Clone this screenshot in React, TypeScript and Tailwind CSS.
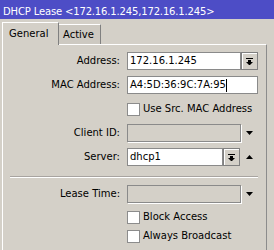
import React from "react";

function ComboBtn() {
  return (
    <div className="w-[17px] h-[18px] bg-[#d4d0c8] border border-[#808080] shadow-[inset_1px_1px_0_#ffffff] flex items-center justify-center">
      <svg width="7" height="7" viewBox="0 0 7 7">
        <rect x="0" y="0" width="7" height="1" fill="#000" />
        <rect x="2" y="2" width="3" height="2" fill="#000" />
        <polygon points="0,4 7,4 3.5,7.5" fill="#000" />
      </svg>
    </div>
  );
}

function Tri({ up }: { up?: boolean }) {
  return (
    <div className="w-[17px] h-[18px] flex items-center justify-center">
      <svg width="7" height="4" viewBox="0 0 7 4">
        {up ? (
          <polygon points="3.5,0 7,4 0,4" fill="#000" />
        ) : (
          <polygon points="0,0 7,0 3.5,4" fill="#000" />
        )}
      </svg>
    </div>
  );
}

function Label({ children }: { children?: React.ReactNode }) {
  return (
    <div className="w-[124px] pr-[7px] text-right shrink-0 leading-[12px]">{children}</div>
  );
}

function Check({ label }: { label: string }) {
  return (
    <div className="flex items-center h-[18px]">
      <Label />
      <div className="w-[13px] h-[13px] bg-white border border-[#8c8c8c]" />
      <span className="ml-[3px] leading-[12px]">{label}</span>
    </div>
  );
}

export default function App() {
  return (
    <div className="w-[274px] h-[250px] overflow-hidden bg-[#d4d0c8] text-black text-[10px] font-['DejaVu_Sans',sans-serif]">
      <div className="h-[19px] bg-[#4d4dc6] text-white pl-[3px] pt-[6px] leading-[12px] whitespace-nowrap tracking-[-0.15px]">
        DHCP Lease &lt;172.16.1.245,172.16.1.245&gt;
      </div>
      <div className="flex items-end h-[25px] pl-[2px]">
        <div className="relative z-10 -mb-px h-[23px] w-[57px] bg-[#d4d0c8] border-l border-t border-r border-l-white border-t-white border-r-[#808080] flex items-center pl-[6px] leading-[12px]">
          General
        </div>
        <div className="h-[20px] w-[42px] bg-[#cdc9c1] border-t border-r border-t-white border-r-[#808080] flex items-center pl-[4px] leading-[12px]">
          Active
        </div>
      </div>
      <div className="ml-[2px] w-[265px] h-[220px] border-l border-t border-r border-l-white border-t-white border-r-[#8c8c8c] pt-[7px]">
        <div className="flex items-center h-[18px]">
          <Label>Address:</Label>
          <div className="w-[114px] h-[18px] bg-white border border-[#8a8a8a] pl-[2px] flex items-center leading-[12px]">
            172.16.1.245
          </div>
          <ComboBtn />
        </div>
        <div className="flex items-center h-[18px] mt-[6px]">
          <Label>MAC Address:</Label>
          <div className="w-[131px] h-[18px] bg-white border border-[#8a8a8a] pl-[2px] flex items-center leading-[12px]">
            A4:5D:36:9C:7A:95
            <span className="inline-block w-px h-[13px] bg-black" />
          </div>
        </div>
        <div className="mt-[6px]">
          <Check label="Use Src. MAC Address" />
        </div>
        <div className="flex items-center h-[18px] mt-[6px]">
          <Label>Client ID:</Label>
          <div className="w-[114px] h-[18px] bg-[#d4d0c8] border border-[#8a8a8a] shadow-[1px_1px_0_#ffffff]" />
          <Tri />
        </div>
        <div className="flex items-center h-[18px] mt-[6px]">
          <Label>Server:</Label>
          <div className="w-[96px] h-[18px] bg-white border border-[#8a8a8a] pl-[2px] flex items-center leading-[12px]">
            dhcp1
          </div>
          <ComboBtn />
          <div className="w-px" />
          <Tri up />
        </div>
        <div className="mt-[10px] ml-[7px] w-[248px] h-px bg-[#a8a4a0] shadow-[0_1px_0_#ffffff]" />
        <div className="flex items-center h-[18px] mt-[8px]">
          <Label>Lease Time:</Label>
          <div className="w-[114px] h-[18px] bg-[#d4d0c8] border border-[#8a8a8a] shadow-[1px_1px_0_#ffffff]" />
          <Tri />
        </div>
        <div className="mt-[5px]">
          <Check label="Block Access" />
        </div>
        <div className="mt-[1px]">
          <Check label="Always Broadcast" />
        </div>
      </div>
    </div>
  );
}
